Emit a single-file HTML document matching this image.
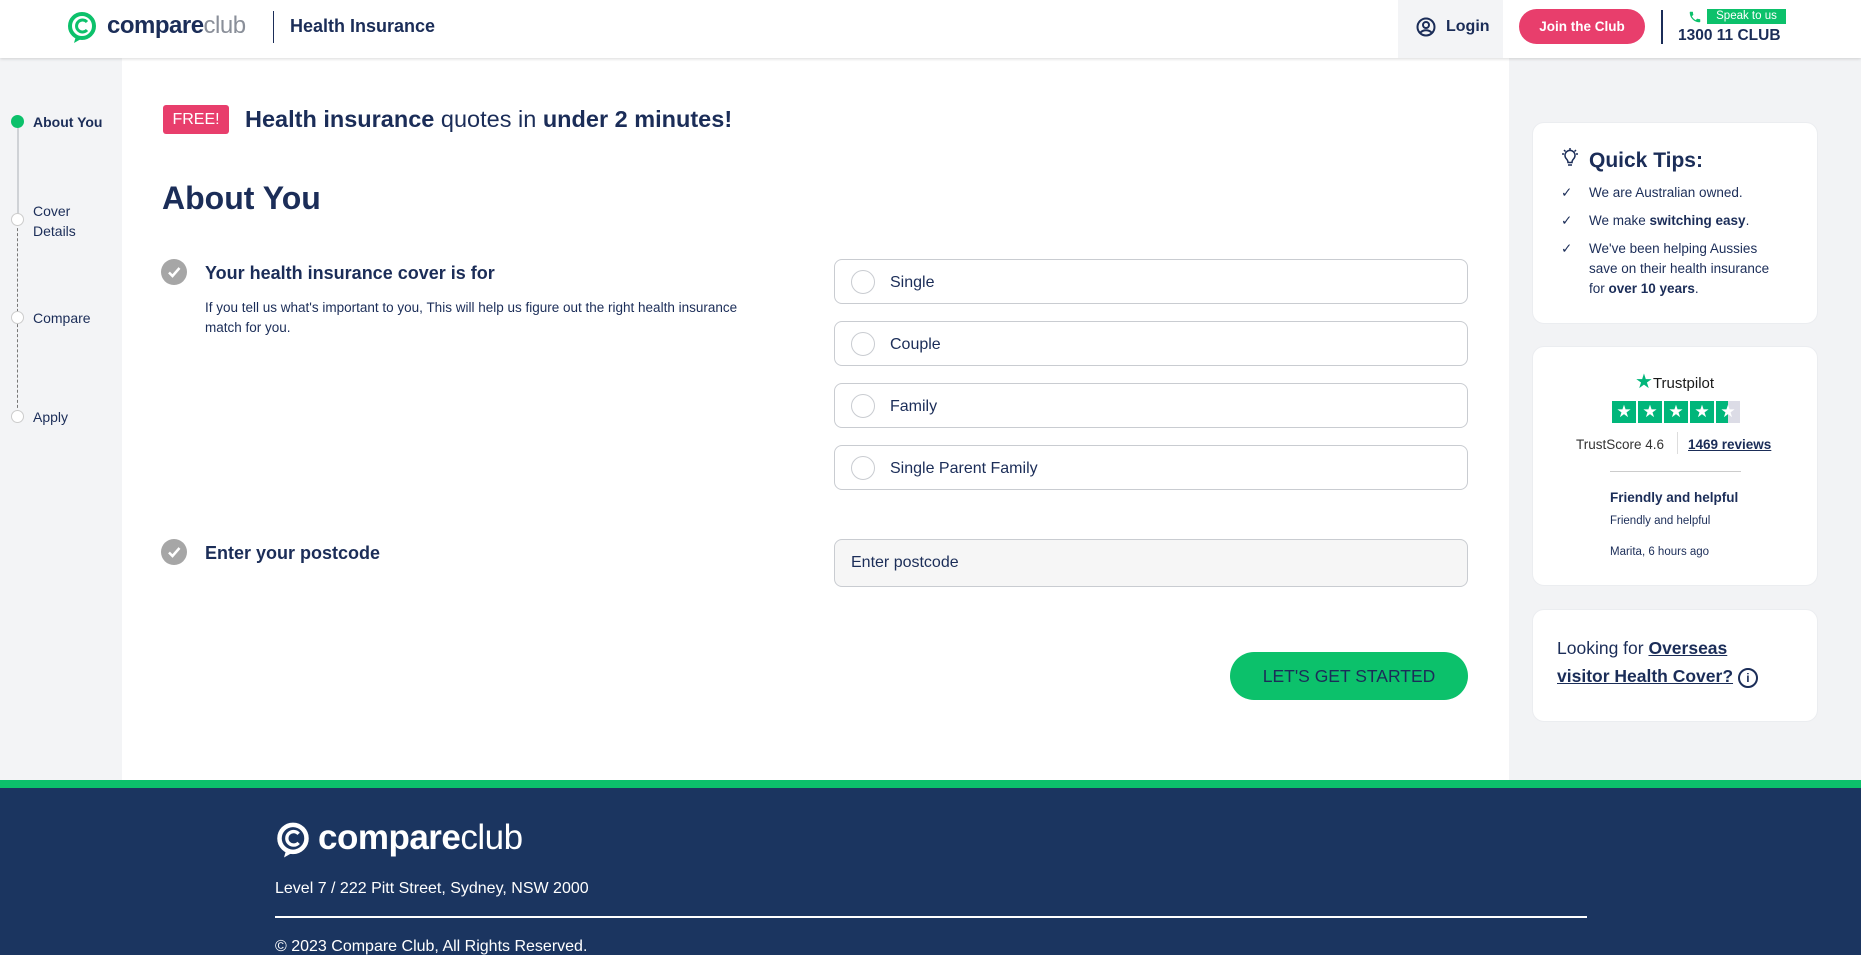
<!DOCTYPE html>
<html><head><meta charset="utf-8"><style>
*{box-sizing:border-box;margin:0;padding:0}
body{width:1861px;height:955px;overflow:hidden;font-family:"Liberation Sans",sans-serif;color:#1b2d58;background:#fff;position:relative}
.a{position:absolute}
.hdr{left:0;top:0;width:1861px;height:58px;background:#fff;box-shadow:0 1px 3px rgba(0,0,0,.15);z-index:2}
.side{left:0;top:58px;width:122px;height:722px;background:#f3f4f6}
.right{left:1509px;top:58px;width:352px;height:722px;background:#f2f3f5}
.card{background:#fff;border-radius:12px;border:1px solid #ebedf0}
.opt{left:834px;width:634px;height:45px;border:1px solid #c9ccd1;border-radius:8px;background:#fff}
.opt .r{position:absolute;left:16px;top:10px;width:24px;height:24px;border:1px solid #c9ccd1;border-radius:50%}
.opt span{position:absolute;left:55px;top:14px;font-size:16px}
.chk{width:26px;height:26px;border-radius:50%;background:#a6a6a6}
.dot{width:13px;height:13px;border-radius:50%;border:1px solid #ccc;background:#fff;left:11px}
.sl{left:33px;font-size:14px}
.tip{left:1557px;font-size:13.5px;line-height:20px}
.tip b{font-weight:bold}
</style></head><body>
<div class="a hdr">
 <svg class="a" style="left:66px;top:11px" width="32" height="33" viewBox="0 0 32 33"><circle cx="16" cy="15" r="12" fill="none" stroke="#0cc16b" stroke-width="4"/><path d="M21 11a6 6 0 1 0 0 8" fill="none" stroke="#0cc16b" stroke-width="3"/><path d="M10 25l-2 7 7-4" fill="#0cc16b"/></svg>
 <div class="a" style="left:107px;top:12px;font-size:24px;font-weight:bold;letter-spacing:-.5px">compare<span style="font-weight:normal;color:#8a8f99">club</span></div>
 <div class="a" style="left:273px;top:11px;width:1px;height:32px;background:#1b2d58"></div>
 <div class="a" style="left:290px;top:16px;font-size:18px;font-weight:bold">Health Insurance</div>
 <div class="a" style="left:1398px;top:0;width:105px;height:58px;background:#f3f4f6"></div>
 <svg class="a" style="left:1416px;top:17px" width="20" height="20" viewBox="0 0 20 20"><circle cx="10" cy="10" r="8.5" fill="none" stroke="#1b2d58" stroke-width="2"/><circle cx="10" cy="8" r="3" fill="none" stroke="#1b2d58" stroke-width="2"/><path d="M4.5 15.5c3-3 8-3 11 0" fill="none" stroke="#1b2d58" stroke-width="2"/></svg>
 <div class="a" style="left:1446px;top:18px;font-size:16px;font-weight:bold">Login</div>
 <div class="a" style="left:1519px;top:9px;width:126px;height:35px;border-radius:18px;background:#e83e6c;color:#fff;font-size:13.5px;font-weight:bold;text-align:center;line-height:35px">Join the Club</div>
 <div class="a" style="left:1661px;top:10px;width:2px;height:34px;background:#1b2d58"></div>
 <svg class="a" style="left:1688px;top:10px" width="14" height="14" viewBox="0 0 24 24"><path fill="#0cc16b" d="M6.6 10.8c1.4 2.8 3.8 5.1 6.6 6.6l2.2-2.2c.3-.3.7-.4 1-.2 1.1.4 2.3.6 3.6.6.6 0 1 .4 1 1V20c0 .6-.4 1-1 1C10.6 21 3 13.4 3 4c0-.6.4-1 1-1h3.5c.6 0 1 .4 1 1 0 1.3.2 2.5.6 3.6.1.3 0 .7-.2 1l-2.3 2.2z"/></svg>
 <div class="a" style="left:1707px;top:9px;width:79px;height:15px;background:#0cc16b;color:#fff;font-size:11.5px;text-align:center;line-height:15px">Speak to us</div>
 <div class="a" style="left:1678px;top:27px;font-size:15.5px;font-weight:bold">1300 11 CLUB</div>
</div>
<div class="a side"></div>
<div class="a" style="left:17px;top:121px;width:2px;height:97px;background:#cfd2d6"></div>
<div class="a" style="left:17px;top:218px;height:200px;border-left:1px dashed #777"></div>
<div class="a dot" style="top:115px;background:#0cc16b;border-color:#0cc16b"></div>
<div class="a sl" style="top:114px;font-weight:bold">About You</div>
<div class="a dot" style="top:213px"></div>
<div class="a sl" style="top:201px;line-height:20px">Cover<br>Details</div>
<div class="a dot" style="top:311px"></div>
<div class="a sl" style="top:310px">Compare</div>
<div class="a dot" style="top:410px"></div>
<div class="a sl" style="top:409px">Apply</div>

<div class="a" style="left:163px;top:105px;width:66px;height:29px;border-radius:3px;background:#e83e6c;color:#fff;font-size:16px;text-align:center;line-height:29px">FREE!</div>
<div class="a" style="left:245px;top:106px;font-size:23.5px"><b>Health insurance</b> quotes in <b>under 2 minutes!</b></div>
<div class="a" style="left:162px;top:180px;font-size:32px;font-weight:bold">About You</div>

<div class="a chk" style="left:161px;top:259px"></div>
<svg class="a" style="left:161px;top:259px" width="26" height="26"><path d="M8 13.5l3.5 3.5 7-8" fill="none" stroke="#fff" stroke-width="2.5"/></svg>
<div class="a" style="left:205px;top:263px;font-size:18px;font-weight:bold">Your health insurance cover is for</div>
<div class="a" style="left:205px;top:298px;font-size:13.5px;line-height:20px;width:600px">If you tell us what's important to you, This will help us figure out the right health insurance<br>match for you.</div>

<div class="a opt" style="top:259px"><div class="r"></div><span>Single</span></div>
<div class="a opt" style="top:321px"><div class="r"></div><span>Couple</span></div>
<div class="a opt" style="top:383px"><div class="r"></div><span>Family</span></div>
<div class="a opt" style="top:445px"><div class="r"></div><span>Single Parent Family</span></div>

<div class="a chk" style="left:161px;top:539px"></div>
<svg class="a" style="left:161px;top:539px" width="26" height="26"><path d="M8 13.5l3.5 3.5 7-8" fill="none" stroke="#fff" stroke-width="2.5"/></svg>
<div class="a" style="left:205px;top:543px;font-size:18px;font-weight:bold">Enter your postcode</div>
<div class="a" style="left:834px;top:539px;width:634px;height:48px;border:1px solid #c9ccd1;border-radius:8px;background:#f6f6f6"><span style="position:absolute;left:16px;top:14px;font-size:16px">Enter postcode</span></div>

<div class="a" style="left:1230px;top:652px;width:238px;height:48px;border-radius:24px;background:#0cc16b;font-size:17.5px;text-align:center;line-height:48px">LET'S GET STARTED</div>

<div class="a right"></div>
<div class="a card" style="left:1532px;top:122px;width:286px;height:202px"></div>
<svg class="a" style="left:1557px;top:146px" width="26" height="26" viewBox="0 0 26 26"><path d="M9.5 13a5 5 0 1 1 7 0c-1 1-1.5 2-1.5 3.5h-4c0-1.5-.5-2.5-1.5-3.5z" fill="none" stroke="#1b2d58" stroke-width="1.5"/><path d="M11 19h4M13 2v2M5 8h2M19 8h2M7 4l1.5 1.5M19 4l-1.5 1.5" stroke="#1b2d58" stroke-width="1.5"/></svg>
<div class="a" style="left:1589px;top:149px;font-size:21px;font-weight:bold">Quick Tips:</div>
<div class="a tip" style="top:183px;width:224px">
<div style="position:relative;padding-left:32px;margin-bottom:8px"><span style="position:absolute;left:4px">✓</span>We are Australian owned.</div>
<div style="position:relative;padding-left:32px;margin-bottom:8px"><span style="position:absolute;left:4px">✓</span>We make <b>switching easy</b>.</div>
<div style="position:relative;padding-left:32px"><span style="position:absolute;left:4px">✓</span>We've been helping Aussies save on their health insurance for <b>over 10 years</b>.</div>
</div>

<div class="a card" style="left:1532px;top:346px;width:286px;height:240px"></div>
<div class="a" style="left:1635px;top:369px;font-size:15px;color:#191919"><span style="color:#00b67a;font-size:20px">★</span>Trustpilot</div>
<div class="a" style="left:1612px;top:401px;display:flex;gap:2px">
<div style="width:24px;height:22px;background:#00b67a;color:#fff;text-align:center;font-size:17px;line-height:22px">★</div><div style="width:24px;height:22px;background:#00b67a;color:#fff;text-align:center;font-size:17px;line-height:22px">★</div><div style="width:24px;height:22px;background:#00b67a;color:#fff;text-align:center;font-size:17px;line-height:22px">★</div><div style="width:24px;height:22px;background:#00b67a;color:#fff;text-align:center;font-size:17px;line-height:22px">★</div><div style="width:24px;height:22px;background:linear-gradient(90deg,#00b67a 50%,#dcdce6 50%);color:#fff;text-align:center;font-size:17px;line-height:22px">★</div></div>
<div class="a" style="left:1576px;top:437px;font-size:13.5px;color:#333">TrustScore 4.6</div>
<div class="a" style="left:1677px;top:432px;width:1px;height:22px;background:#ddd"></div>
<div class="a" style="left:1688px;top:437px;font-size:13.5px;font-weight:bold;text-decoration:underline">1469 reviews</div>
<div class="a" style="left:1610px;top:471px;width:131px;height:1px;background:#ccc"></div>
<div class="a" style="left:1610px;top:490px;font-size:13.5px;font-weight:bold">Friendly and helpful</div>
<div class="a" style="left:1610px;top:515px;font-size:11.5px">Friendly and helpful</div>
<div class="a" style="left:1610px;top:546px;font-size:11.5px">Marita, 6 hours ago</div>

<div class="a card" style="left:1532px;top:609px;width:286px;height:113px"></div>
<div class="a" style="left:1557px;top:634px;font-size:17.5px;line-height:28px">Looking for <b style="text-decoration:underline">Overseas<br>visitor Health Cover?</b> <span style="display:inline-block;width:20px;height:20px;border:2px solid #1b2d58;border-radius:50%;font-size:12px;text-align:center;line-height:16px;font-weight:bold;vertical-align:0">i</span></div>

<div class="a" style="left:0;top:780px;width:1861px;height:8px;background:#0cc16b"></div>
<div class="a" style="left:0;top:788px;width:1861px;height:167px;background:#1b3560"></div>
<svg class="a" style="left:275px;top:820px" width="36" height="40" viewBox="0 0 32 33"><circle cx="16" cy="15" r="12" fill="none" stroke="#fff" stroke-width="4"/><path d="M21 11a6 6 0 1 0 0 8" fill="none" stroke="#fff" stroke-width="3"/><path d="M10 25l-2 7 7-4" fill="#fff"/></svg>
<div class="a" style="left:318px;top:818px;font-size:35px;font-weight:bold;color:#fff;letter-spacing:-.5px">compare<span style="font-weight:normal">club</span></div>
<div class="a" style="left:275px;top:880px;font-size:16px;color:#fff">Level 7 / 222 Pitt Street, Sydney, NSW 2000</div>
<div class="a" style="left:275px;top:916px;width:1312px;height:2px;background:#fff"></div>
<div class="a" style="left:275px;top:938px;font-size:16px;color:#fff">© 2023 Compare Club, All Rights Reserved.</div>
</body></html>
